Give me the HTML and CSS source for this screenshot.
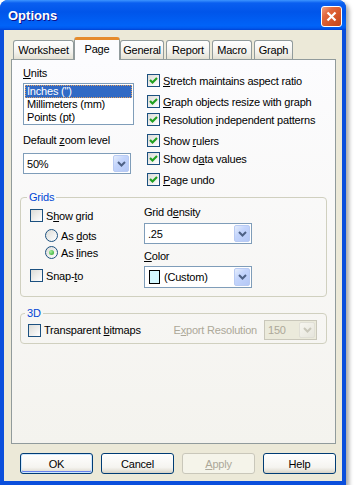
FILE: index.html
```html
<!DOCTYPE html>
<html lang="en">

<head>
  <meta charset="UTF-8">
  <meta name="viewport" content="width=device-width, initial-scale=1.0">
  <title>Options</title>
  <link rel="stylesheet" href="styles.css">
</head>

<body>
  <div id="window">
    <div id="title-bar">
      <span class="title">Options</span>
      <button class="close-btn" aria-label="Close">
        <svg width="11" height="11" viewBox="0 0 11 11"><path d="M1.5 1.5 L9.5 9.5 M9.5 1.5 L1.5 9.5" stroke="#fff" stroke-width="2.2" /></svg>
      </button>
    </div>

    <div id="client">
      <div class="tabs">
        <div class="tab tab-worksheet">Worksheet</div>
        <div class="tab tab-page active">Page</div>
        <div class="tab tab-general">General</div>
        <div class="tab tab-report">Report</div>
        <div class="tab tab-macro">Macro</div>
        <div class="tab tab-graph">Graph</div>
      </div>

      <div class="tab-panel">
        <div class="top-section">
          <div class="units-col">
            <div class="field-label"><u>U</u>nits</div>
            <div class="listbox">
              <div class="list-item selected">Inches (")</div>
              <div class="list-item">Millimeters (mm)</div>
              <div class="list-item">Points (pt)</div>
            </div>
            <div class="field-label zoom-label">Default <u>z</u>oom level</div>
            <div class="combo zoom-combo">
              <span class="combo-text">50%</span>
              <span class="combo-btn"><svg width="9" height="6" viewBox="0 0 9 6"><path d="M1 1 L4.5 4.5 L8 1" fill="none" stroke="#4d6185" stroke-width="2" /></svg></span>
            </div>
          </div>

          <div class="options-col">
            <div class="check-row"><span class="checkbox"><svg width="11" height="11" viewBox="0 0 11 11"><path d="M2 5 L4.5 7.5 L9 3" fill="none" stroke="#21a121" stroke-width="2.2" /></svg></span><span><u>S</u>tretch maintains aspect ratio</span></div>
            <div class="check-row spaced"><span class="checkbox"><svg width="11" height="11" viewBox="0 0 11 11"><path d="M2 5 L4.5 7.5 L9 3" fill="none" stroke="#21a121" stroke-width="2.2" /></svg></span><span><u>G</u>raph objects resize with graph</span></div>
            <div class="check-row"><span class="checkbox"><svg width="11" height="11" viewBox="0 0 11 11"><path d="M2 5 L4.5 7.5 L9 3" fill="none" stroke="#21a121" stroke-width="2.2" /></svg></span><span>Resolution <u>i</u>ndependent patterns</span></div>
            <div class="check-row spaced"><span class="checkbox"><svg width="11" height="11" viewBox="0 0 11 11"><path d="M2 5 L4.5 7.5 L9 3" fill="none" stroke="#21a121" stroke-width="2.2" /></svg></span><span>Show <u>r</u>ulers</span></div>
            <div class="check-row"><span class="checkbox"><svg width="11" height="11" viewBox="0 0 11 11"><path d="M2 5 L4.5 7.5 L9 3" fill="none" stroke="#21a121" stroke-width="2.2" /></svg></span><span>Show d<u>a</u>ta values</span></div>
            <div class="check-row spaced"><span class="checkbox"><svg width="11" height="11" viewBox="0 0 11 11"><path d="M2 5 L4.5 7.5 L9 3" fill="none" stroke="#21a121" stroke-width="2.2" /></svg></span><span><u>P</u>age undo</span></div>
          </div>
        </div>

        <fieldset class="group grids-group">
          <legend>Grids</legend>
          <div class="grids-body">
            <div class="grid-options">
              <div class="check-row"><span class="checkbox"></span><span>S<u>h</u>ow grid</span></div>
              <div class="check-row radio-row dots-row"><span class="radio"></span><span>As <u>d</u>ots</span></div>
              <div class="check-row radio-row lines-row"><span class="radio checked"></span><span>As <u>l</u>ines</span></div>
              <div class="check-row snap-row"><span class="checkbox"></span><span>Snap-<u>t</u>o</span></div>
            </div>
            <div class="grid-fields">
              <div class="field-label">Grid d<u>e</u>nsity</div>
              <div class="combo density-combo">
                <span class="combo-text">.25</span>
                <span class="combo-btn"><svg width="9" height="6" viewBox="0 0 9 6"><path d="M1 1 L4.5 4.5 L8 1" fill="none" stroke="#4d6185" stroke-width="2" /></svg></span>
              </div>
              <div class="field-label color-label"><u>C</u>olor</div>
              <div class="combo color-combo">
                <span class="swatch"></span>
                <span class="combo-text">(Custom)</span>
                <span class="combo-btn"><svg width="9" height="6" viewBox="0 0 9 6"><path d="M1 1 L4.5 4.5 L8 1" fill="none" stroke="#4d6185" stroke-width="2" /></svg></span>
              </div>
            </div>
          </div>
        </fieldset>

        <fieldset class="group threed-group">
          <legend>3D</legend>
          <div class="threed-body">
            <div class="check-row"><span class="checkbox"></span><span>Transparent <u>b</u>itmaps</span></div>
            <div class="export-field">
              <span class="disabled-text">E<u>x</u>port Resolution</span>
              <div class="combo res-combo disabled">
                <span class="combo-text">150</span>
                <span class="combo-btn"><svg width="9" height="6" viewBox="0 0 9 6"><path d="M1 1 L4.5 4.5 L8 1" fill="none" stroke="#c9c7ba" stroke-width="2" /></svg></span>
              </div>
            </div>
          </div>
        </fieldset>
      </div>

      <div class="dialog-buttons">
        <button class="btn default">OK</button>
        <button class="btn">Cancel</button>
        <button class="btn" disabled><u>A</u>pply</button>
        <button class="btn">Help</button>
      </div>
    </div>
  </div>
</body>

</html>
```

FILE: styles.css
```css
body {
  margin: 0;
  background: #fff;
  font-family: "Liberation Sans", Arial, sans-serif;
  font-size: 11px;
  letter-spacing: -0.2px;
  color: #000;
}

u {
  text-decoration-thickness: 1px;
  text-underline-offset: 1px;
}

#window {
  width: 346px;
  display: flex;
  flex-direction: column;
  background: #0b4fdc;
  border-radius: 8px 8px 0 0;
  box-shadow: 3px 3px 4px rgb(0 0 0 / 35%);
}

#title-bar {
  height: 30px;
  display: flex;
  align-items: center;
  justify-content: space-between;
  padding: 0 4px 0 8px;
  border-radius: 8px 8px 0 0;
  background: linear-gradient(#3d95ff 0%, #0a5ff0 10%, #0055ea 40%, #0063f8 85%, #005bf0 93%, #0043d6 100%);
}

.title {
  color: #fff;
  font-weight: bold;
  font-size: 13px;
  letter-spacing: 0;
  text-shadow: 1px 1px #0f1089;
}

.close-btn {
  width: 21px;
  height: 21px;
  margin-top: 3px;
  padding: 0;
  border: 1px solid #fff;
  border-radius: 3px;
  background: linear-gradient(135deg, #f0a283 0%, #e2683e 30%, #d5572a 60%, #c2461b 100%);
  display: flex;
  align-items: center;
  justify-content: center;
}

#client {
  margin: 0 4px 4px;
  padding: 7px 6px 7px 7px;
  background: #ece9d8;
  display: flex;
  flex-direction: column;
}

.tabs {
  height: 22px;
  display: flex;
  align-items: flex-end;
  gap: 2px;
  padding-left: 2px;
  position: relative;
  z-index: 1;
}

.tab {
  height: 19px;
  box-sizing: border-box;
  border: 1px solid #919b9c;
  border-bottom: none;
  border-radius: 3px 3px 0 0;
  background: linear-gradient(#fff, #f3f2ee 60%, #e3e0d3);
  text-align: center;
  line-height: 18px;
}

.tab.active {
  height: 23px;
  margin: 0 -2px -1px;
  border-top: 3px solid #e68b2c;
  background: #fcfcfe;
  line-height: 19px;
}

.tab-worksheet { width: 61px; }
.tab-page { width: 42px; }
.tab-page.active { width: 46px; }
.tab-general { width: 44px; }
.tab-report { width: 44px; }
.tab-macro { width: 40px; }
.tab-graph { width: 39px; }

.tab-panel {
  height: 385px;
  box-sizing: border-box;
  border: 1px solid #919b9c;
  background: linear-gradient(#fcfcfe, #f4f3ee);
  padding: 7px 8px 0;
}

.top-section {
  display: flex;
}

.units-col {
  width: 111px;
  margin-left: 3px;
}

.field-label {
  line-height: 13px;
}

.listbox {
  margin-top: 3px;
  height: 42px;
  box-sizing: border-box;
  border: 1px solid #7f9db9;
  background: #fff;
  padding: 1px;
  overflow: hidden;
}

.list-item {
  height: 13px;
  line-height: 13px;
  padding-left: 2px;
}

.list-item.selected {
  background: #316ac5;
  color: #fff;
  outline: 1px dotted #e0a060;
  outline-offset: -1px;
}

.zoom-label {
  margin-top: 9px;
}

.combo {
  height: 21px;
  box-sizing: border-box;
  display: flex;
  align-items: center;
  border: 1px solid #7f9db9;
  background: #fff;
  padding: 1px;
}

.zoom-combo {
  width: 108px;
  margin-top: 6px;
}

.combo-text {
  flex: 1;
  padding-left: 2px;
}

.combo-btn {
  width: 16px;
  height: 100%;
  box-sizing: border-box;
  border: 1px solid #b9cbf3;
  border-radius: 2px;
  background: linear-gradient(135deg, #e6eefc 0%, #c4d5fc 40%, #b4c8f6 100%);
  display: flex;
  align-items: center;
  justify-content: center;
}

.options-col {
  margin-left: 13px;
  padding-top: 7px;
}

.check-row {
  height: 13px;
  display: flex;
  align-items: center;
  gap: 3px;
  white-space: nowrap;
}

.check-row + .check-row {
  margin-top: 5px;
}

.check-row.spaced {
  margin-top: 8px;
}

.checkbox {
  width: 13px;
  height: 13px;
  flex: none;
  box-sizing: border-box;
  border: 1px solid #1c5180;
  background: linear-gradient(135deg, #dcdcd7, #fff);
  display: flex;
}

.radio {
  width: 13px;
  height: 13px;
  flex: none;
  box-sizing: border-box;
  border: 1px solid #1c5180;
  border-radius: 50%;
  background: linear-gradient(135deg, #dcdcd7, #fff);
  display: flex;
  align-items: center;
  justify-content: center;
}

.radio.checked::after {
  content: "";
  width: 5px;
  height: 5px;
  border-radius: 50%;
  background: radial-gradient(circle at 35% 35%, #a6f0a0, #21a121);
}

.group {
  margin: 5px 0 0;
  border: 1px solid #d0d0bf;
  border-radius: 4px;
  padding: 0 9px 8px;
  min-width: 0;

  legend {
    padding: 0 2px;
    margin-left: -3px;
    line-height: 13px;
    color: #0046d5;
  }
}

.grids-body {
  display: flex;
}

.grid-options {
  width: 114px;
  padding-top: 5px;
}

.radio-row {
  margin-left: 15px;
}

.check-row.dots-row { margin-top: 7px; }
.check-row.lines-row { margin-top: 4px; }
.check-row.snap-row { margin-top: 10px; }

.grid-fields {
  padding-top: 2px;
}

.density-combo {
  width: 108px;
  margin-top: 4px;
}

.color-label {
  margin-top: 6px;
}

.color-combo {
  width: 108px;
  height: 22px;
  margin-top: 3px;

  .combo-text {
    padding-left: 4px;
  }
}

.swatch {
  width: 11px;
  height: 14px;
  margin-left: 3px;
  box-sizing: border-box;
  border: 1px solid #000;
  background: #d4f8ff;
}

.threed-group {
  margin-top: 10px;
  padding: 0 9px 3px 7px;
}

.threed-body {
  height: 20px;
  display: flex;
  align-items: center;
}

.export-field {
  margin-left: auto;
  display: flex;
  align-items: center;
  gap: 7px;
}

.disabled-text {
  color: #aca899;
}

.res-combo {
  width: 53px;
  height: 20px;
}

.combo.disabled {
  border-color: #c9c7ba;
  background: #ebeadb;
  color: #aca899;

  .combo-btn {
    border-color: #e0dfd6;
    background: linear-gradient(135deg, #f7f6f0, #e6e5dc);
  }
}

.dialog-buttons {
  display: flex;
  justify-content: flex-end;
  gap: 8px;
  margin-top: 9px;
}

.btn {
  width: 73px;
  height: 21px;
  padding: 0;
  border: 1px solid #003c74;
  border-radius: 3px;
  background: linear-gradient(#fff, #f5f4f0 70%, #e3e0d6 90%, #d6d0c5);
  font-family: inherit;
  font-size: 11px;
  letter-spacing: -0.2px;
  color: #000;
}

.btn.default {
  box-shadow: inset 0 0 0 1px #cee7ff, inset 0 -1px 0 1px #6982ee;
}

.btn:disabled {
  border-color: #c9c7ba;
  background: #f5f4ea;
  color: #aca899;
}
```
